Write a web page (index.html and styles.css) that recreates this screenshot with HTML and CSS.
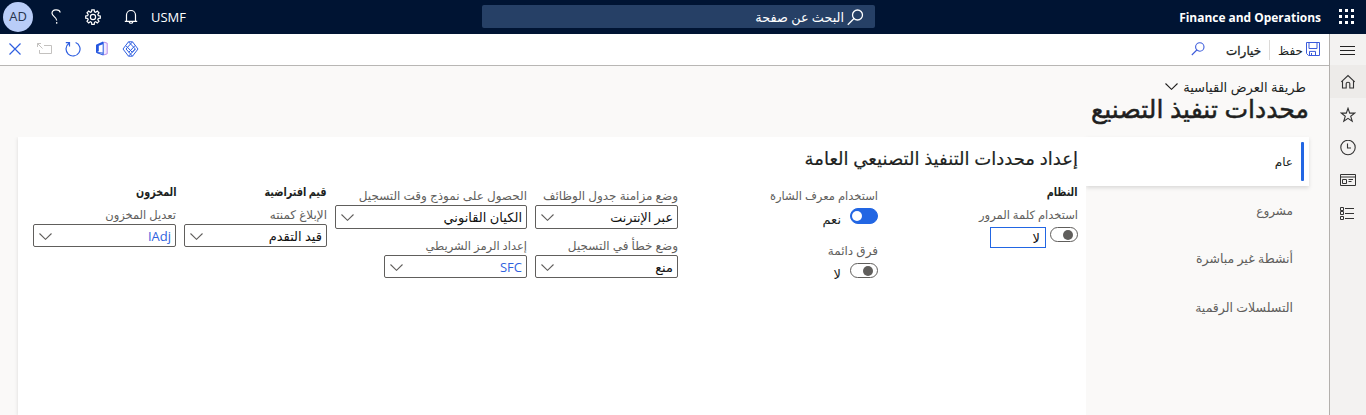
FILE: index.html
```
<!DOCTYPE html>
<html lang="ar" dir="rtl">
<head>
<meta charset="utf-8">
<title>محددات تنفيذ التصنيع</title>
<link rel="stylesheet" href="styles.css">
</head>
<body>
<svg class="defs" width="0" height="0"><symbol id="chevron" viewBox="0 0 13 7"><path d="M.5.5 6.500 6.300 12.500.5" fill="none" stroke="currentColor" stroke-width="1.100"/></symbol></svg>
<header class="topbar">
  <div class="brand">
    <svg width="16" height="16" viewBox="0 0 16 16" fill="#fff"><path d="M0 0h3v3H0zM6 0h3v3H6zM12 0h3v3h-3zM0 6h3v3H0zM6 6h3v3H6zM12 6h3v3h-3zM0 12h3v3H0zM6 12h3v3H6zM12 12h3v3h-3z"/></svg>
    <b>Finance and Operations</b>
  </div>
  <div class="search">
    <svg width="17" height="17" viewBox="0 0 17 17" fill="none" stroke="#fff" stroke-width="1.300"><circle cx="10.500" cy="6" r="5"/><path d="M7 9.500.8 15.700"/></svg>
    <span>البحث عن صفحة</span>
  </div>
  <div class="account">
    <span class="avatar">AD</span>
    <svg class="help" width="10" height="16" viewBox="0 0 10 16" fill="none" stroke="#fff" stroke-width="1.200"><path d="M9.200 3.500C8.500-.2 1 -.2 1 4.300c0 3.200 4.700 3.500 4.700 7.200M5.700 13v1.800"/></svg>
    <svg class="gear" width="16" height="16" viewBox="0 0 16 16" fill="none" stroke="#fff" stroke-width="1.200"><path d="M6.800.8h2.400l.3 2 1.200.5 1.600-1.200L14 3.800l-1.200 1.600.5 1.200 2 .3v2.300l-2 .3-.5 1.200 1.200 1.600-1.700 1.700-1.600-1.200-1.200.5-.3 2H6.800l-.3-2-1.200-.5-1.600 1.200L2 12.300l1.200-1.600-.5-1.200-2-.3V6.900l2-.3.5-1.200L2 3.800l1.700-1.700 1.600 1.200 1.200-.5z"/><circle cx="8" cy="8" r="2.600"/></svg>
    <svg class="bell" width="14" height="16" viewBox="0 0 14 16" fill="none" stroke="#fff" stroke-width="1.200"><path d="M2.500 12V6a4.500 4.500 0 0 1 9 0v6M.8 12.400h12.400M5.200 12.800c.3 1.900 3.300 1.900 3.600 0"/></svg>
    <span class="company">USMF</span>
  </div>
</header>
<div class="shell">
  <nav class="rail">
    <a><svg width="16" height="16" viewBox="0 0 16 16" fill="none" stroke="#222"><path d="M0 4.500h15M0 8.500h15M0 12.500h15"/></svg></a>
    <a class="active"><svg width="16" height="16" viewBox="0 0 16 16" fill="none" stroke="#333" stroke-width="1.100"><path d="M1.300 7.800 8 1.500l6.700 6.300M2.500 6.800V14h3.700V9.500c0-1.700 3.600-1.700 3.600 0V14h3.700V6.800"/></svg></a>
    <a><svg width="16" height="16" viewBox="0 0 16 16" fill="none" stroke="#333" stroke-width="1.100"><path d="m8 1.300 1.700 4.800h5l-4 3.100 1.500 5L8 11.300l-4.200 2.900 1.500-5-4-3.100h5z"/></svg></a>
    <a><svg width="16" height="16" viewBox="0 0 16 16" fill="none" stroke="#333" stroke-width="1.100"><circle cx="8" cy="7.500" r="7.200"/><path d="M7.500 3.500v4.500H11"/></svg></a>
    <a><svg width="16" height="16" viewBox="0 0 16 16" fill="none" stroke="#333"><path d="M.5 1.500h15v11H.5zM.5 4h15M2.500 6.500h4v4h-4zM8.500 6.500H13M8.500 8.500h3"/></svg></a>
    <a><svg width="16" height="16" viewBox="0 0 16 16" fill="none" stroke="#333"><path d="M.5 1.500h3v3h-3zM.5 5.500h3v3h-3zM.5 10.500h3v3h-3zM5 2.500h9M5 7.500h9M5 12.500h9"/></svg></a>
  </nav>
  <main class="main">
    <div class="toolbar">
      <svg class="save" width="14" height="14" viewBox="0 0 14 14" fill="none" stroke="#3b5bdb"><path d="M.5.5h13v13H2.600L.5 11.400zM3 .5v6h8v-6M3.500 13.400v-4h6v4M5.500 11v2.400"/></svg>
      <span class="save-text">حفظ</span>
      <i class="divider"></i>
      <span class="options">خيارات</span>
      <svg class="find" width="14" height="14" viewBox="0 0 14 14" fill="none" stroke="#3b5bdb" stroke-width="1.100"><circle cx="8.800" cy="5" r="4.200"/><path d="M5.800 8 .8 13"/></svg>
      <div class="actions">
        <svg width="12" height="12" viewBox="0 0 12 12" stroke="#2f5fe0" stroke-width="1.200"><path d="m.5.500 11 11M11.500.500l-11 11"/></svg>
        <svg class="popout" width="16" height="12" viewBox="0 0 16 12" fill="none" stroke="#c3c1bf"><path d="M7 2.500h7.500v8h-12V7M.5 4V.5H4M.5.500 5.500 5.500"/></svg>
        <svg class="refresh" width="16" height="16" viewBox="0 0 16 16" fill="none" stroke="#2f5fe0" stroke-width="1.200"><path d="M10.600 1.500A7 7 0 1 1 4 2.300M4.500 5.500V1.700H.8"/></svg>
        <svg class="office" width="13" height="15" viewBox="0 0 13 15"><path d="M8.500 1 12.200 2.200v10.600L8.500 14" fill="#f3eafe" stroke="#b98be8"/><path d="M8 .6 1 3.800v7.600L3.800 10.200V4.800L8 3.200z" fill="#2456e0"/><path d="M8.200 1v13L1.500 11.500l6.500.6" fill="none" stroke="#2456e0"/></svg>
        <svg class="apps" width="17" height="16" viewBox="0 0 17 16" fill="none" stroke="#2f5fe0" stroke-linejoin="round"><path d="M6.500.8h4L16 8l-5.500 7.200h-4L1 8zM6.500.8 13.300 8l-3 3.300L4.200 5M10.500.8 4 8l6.500 7.200M13.300 8l-6.800 7.200M6.800 11.300 13 4.600"/></svg>
      </div>
    </div>
    <div class="page">
      <div class="view">طريقة العرض القياسية<svg class="view-arrow" width="13" height="7"><use href="#chevron"/></svg></div>
      <h1>محددات تنفيذ التصنيع</h1>
      <div class="content">
        <ul class="tabs">
          <li class="selected">عام</li>
          <li>مشروع</li>
          <li class="wide">أنشطة غير مباشرة</li>
          <li class="wide">التسلسلات الرقمية</li>
        </ul>
        <section class="panel">
          <h2>إعداد محددات التنفيذ التصنيعي العامة</h2>
          <div class="columns">
            <div class="column">
              <h3>النظام</h3>
              <label class="tight">استخدام كلمة المرور</label>
              <div class="toggle-row"><i class="toggle"></i><span class="toggle-box">لا</span></div>
            </div>
            <div class="column offset">
              <label class="tight">استخدام معرف الشارة</label>
              <div class="toggle-row on-row"><i class="toggle on"></i><span class="toggle-value">نعم</span></div>
              <label>فرق دائمة</label>
              <div class="toggle-row"><i class="toggle"></i><span class="toggle-value">لا</span></div>
            </div>
            <div class="column offset">
              <label>وضع مزامنة جدول الوظائف</label>
              <div class="select tall"><span class="net">عبر الإنترنت</span><svg width="13" height="7"><use href="#chevron"/></svg></div>
              <label class="second">وضع خطأ في التسجيل</label>
              <div class="select"><span>منع</span><svg width="13" height="7"><use href="#chevron"/></svg></div>
            </div>
            <div class="column offset">
              <label>الحصول على نموذج وقت التسجيل</label>
              <div class="select tall long"><span>الكيان القانوني</span><svg width="13" height="7"><use href="#chevron"/></svg></div>
              <label class="second tight">إعداد الرمز الشريطي</label>
              <div class="select link"><span>SFC</span><svg width="13" height="7"><use href="#chevron"/></svg></div>
            </div>
            <div class="column">
              <h3>قيم افتراضية</h3>
              <label>الإبلاغ كمنته</label>
              <div class="select"><span>قيد التقدم</span><svg width="13" height="7"><use href="#chevron"/></svg></div>
            </div>
            <div class="column">
              <h3>المخزون</h3>
              <label class="tight">تعديل المخزون</label>
              <div class="select link"><span>IAdj</span><svg width="13" height="7"><use href="#chevron"/></svg></div>
            </div>
          </div>
        </section>
      </div>
    </div>
  </main>
</div>
</body>
</html>
```
FILE: styles.css
```
* { box-sizing: border-box; }
body { margin: 0; height: 415px; overflow: hidden; display: flex; flex-direction: column; font: 12px/16px "Open Sans", "DejaVu Sans", sans-serif; color: #201f1e; white-space: nowrap; background: #faf9f8; }
.defs { display: none; }
svg { flex: none; display: block; }

.topbar { flex: none; height: 34px; background: #001433; color: #fff; display: grid; grid-template-columns: 491px 393px 482px; align-items: start; }
.brand { display: flex; align-items: center; gap: 18px; height: 34px; padding-right: 11px; }
.brand svg { margin-top: -1px; }
.brand b { margin-top: 1px; font-size: 11.950px; }
.search { display: flex; align-items: center; gap: 3px; height: 23px; margin-top: 5px; padding-right: 11px; background: #264066; border-radius: 2px; font-size: 12.800px; }
.search svg { margin-top: 2px; }
.account { direction: ltr; display: flex; align-items: center; height: 33px; padding-left: 3px; font-size: 13px; }
.avatar { width: 30px; height: 30px; border-radius: 50%; background: #b9cdf8; color: #28344c; text-align: center; line-height: 29px; }
.help { margin-left: 18px; }
.gear { margin-left: 24px; }
.bell { margin-left: 23px; }
.company { margin-left: 13px; }

.shell { flex: 1; display: flex; min-height: 0; }
.rail { width: 37px; border-left: 1px solid #b3b0ad; background: #f3f2f1; }
.rail a { display: flex; height: 33px; align-items: center; padding-right: 10px; }
.rail a:first-child { height: 31px; }
.rail .active { background: #edebe9; }
.main { flex: 1; display: flex; flex-direction: column; }

.toolbar { flex: none; height: 32px; display: flex; align-items: center; padding: 0 9px 2px 9px; background: #fff; border-bottom: 1px solid #b8b6b4; }
.save-text { margin-right: 3px; margin-top: 5px; }
.divider { width: 1px; height: 20px; margin: 2px 8px 0; background: #dcdad8; }
.options { -webkit-text-stroke: .3px #201f1e; margin-top: 4px; }
.find { margin-right: 21px; margin-top: 1px; }
.actions { direction: ltr; display: flex; align-items: center; margin-right: auto; }
.popout { margin-left: 16px; }
.refresh { margin-left: 12px; }
.office { margin-left: 14px; }
.apps { margin-left: 14px; }

.page { flex: 1; display: flex; flex-direction: column; padding: 13px 20px 0 18px; }
.view { display: flex; align-items: center; gap: 5px; height: 16px; padding-right: 3px; font-size: 13.100px; }
.view-arrow { margin-top: -2px; }
h1 { margin: 0; height: 42px; font-size: 25.100px; line-height: 26px; font-weight: 400; -webkit-text-stroke: .5px #201f1e; }

.content { flex: 1; display: flex; }
.tabs { width: 223px; margin: 0; padding: 0; list-style: none; color: #605e5c; }
.tabs li { height: 48.600px; display: flex; align-items: center; padding: 1px 16px 0 0; }
.tabs .wide { font-size: 12.500px; }
.tabs .selected { position: relative; height: 49px; color: #201f1e; background: #fff; box-shadow: 0 2px 4px rgba(0,0,0,.13); }
.selected::after { content: ""; position: absolute; right: 5px; top: 5px; width: 3px; height: 39px; background: #2266e3; border-radius: 1px; }
.panel { flex: 1; position: relative; background: #fff; padding: 10px 8px 0 15px; box-shadow: 0 1px 4px rgba(0,0,0,.13); clip-path: inset(0 0 0 -4px); }
h2 { margin: 0; height: 36px; font-size: 18.050px; line-height: 23px; font-weight: 400; -webkit-text-stroke: .2px #201f1e; }
.columns { display: grid; grid-template-columns: 200px 200px 151px 200px 151px 143px; }
.column { display: flex; flex-direction: column; align-items: flex-start; }
.offset { padding-top: 5px; }
h3 { margin: 0; height: 24px; font-size: 12px; line-height: 17px; font-weight: 700; transform: scaleX(.8); transform-origin: right; }
label { height: 17px; color: #605e5c; }
.tight { font-size: 11.500px; }
.second { margin-top: 9px; }

.select { width: 143px; height: 23px; padding: 1px 4px 0 5px; display: flex; justify-content: space-between; border: 1px solid #605e5c; border-radius: 2px; background: #fff; font-size: 13px; line-height: 20px; color: #111; }
.select svg { margin-top: 7px; color: #605e5c; }
.tall { height: 24px; }
.long { width: 192px; }
.net { font-size: 12.700px; }
.link { color: #2f62dd; }
.toggle-row { display: flex; align-items: flex-start; gap: 4px; margin-top: 3px; font-size: 13px; }
.on-row { height: 35px; }
.toggle { width: 28px; height: 15px; border: 1px solid #605e5c; border-radius: 8px; background: #fff; display: flex; align-items: center; padding: 0 4px; }
.toggle::before { content: ""; width: 10px; height: 10px; border-radius: 50%; background: #605e5c; }
.on { height: 16px; background: #2266e3; border-color: #2266e3; padding: 0 1px; justify-content: flex-end; }
.on::before { background: #fff; }
.toggle-value { margin: 3px 5px 0 0; }
.toggle-box { width: 56px; height: 21px; border: 1px solid #2266e3; padding: 2px 5px 0 0; color: #111; }
```
